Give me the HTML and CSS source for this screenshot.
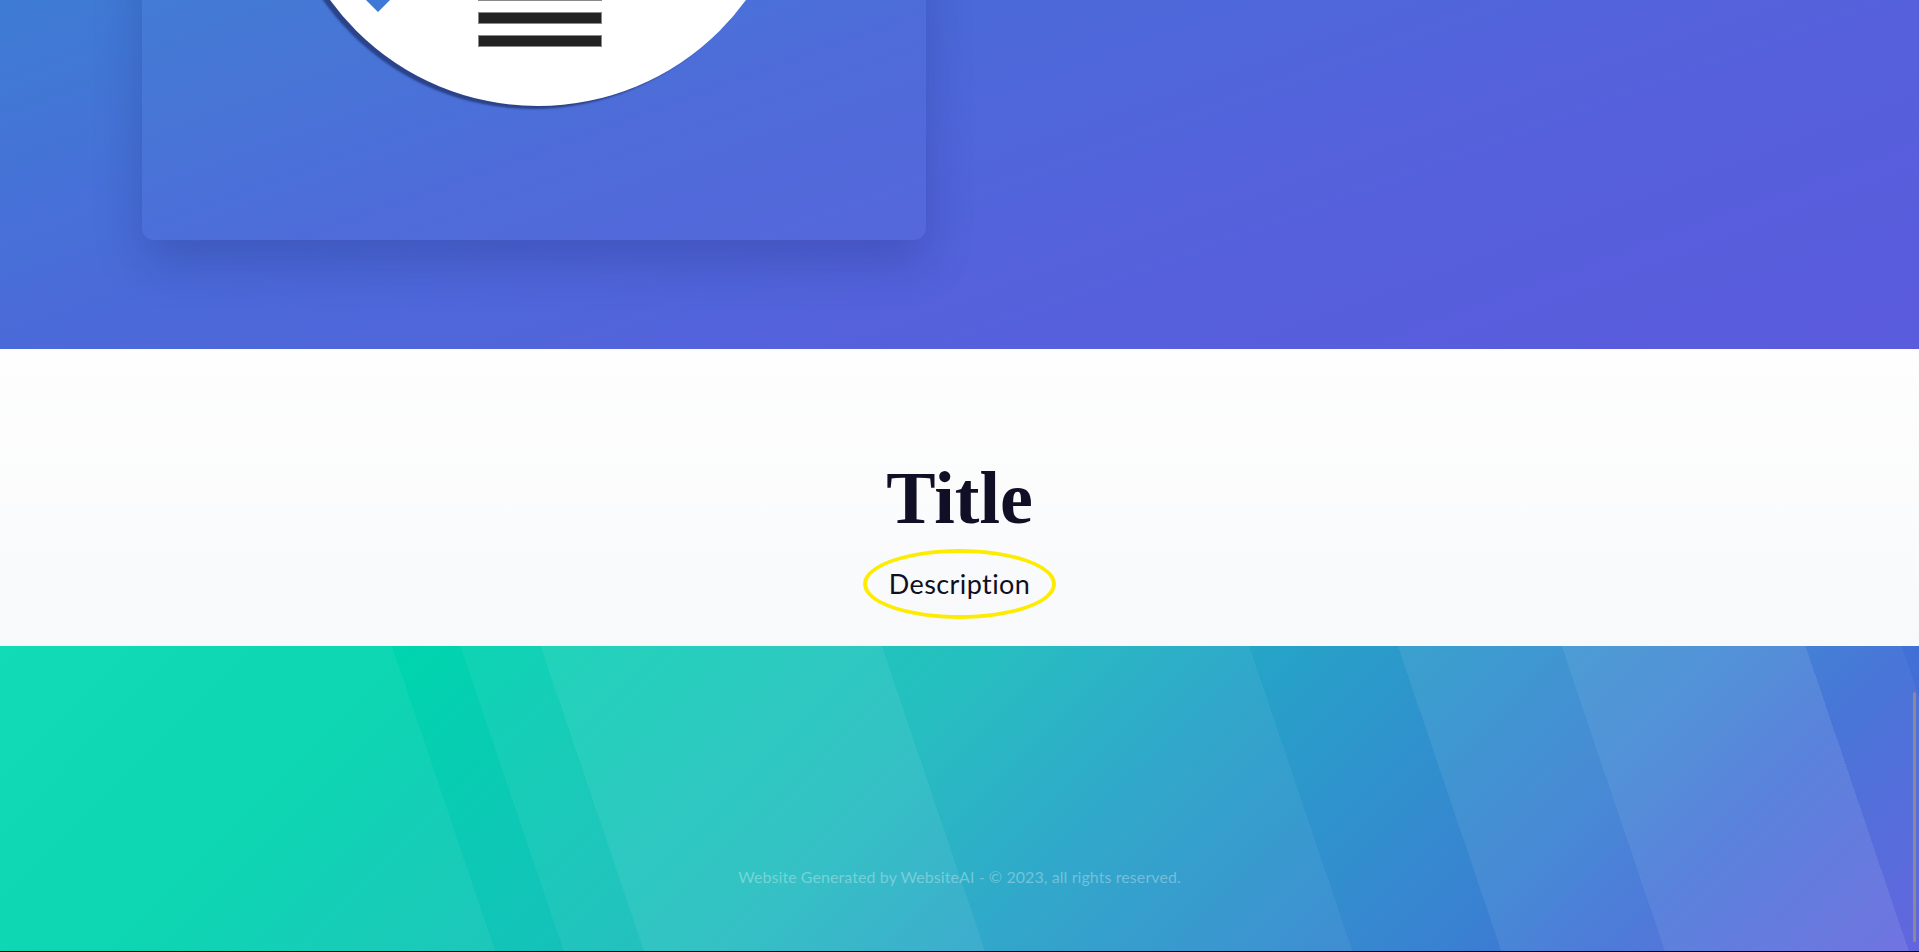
FILE: index.html
```html
<!DOCTYPE html>
<html lang="en">
<head>
<meta charset="utf-8">
<title>Website</title>
<link rel="stylesheet" href="styles.css">
</head>
<body>
<main class="page">
  <section class="hero">
    <div class="hero-card">
      <svg class="hero-icon" viewBox="0 0 514 514" width="514" height="514" aria-hidden="true">
        <g class="check">
          <polygon points="63,386 97,420 150,367 138,355 97,396 75,374"/>
          <polygon points="63,314 97,348 150,295 138,283 97,324 75,302"/>
          <polygon points="63,242 97,276 150,223 138,211 97,252 75,230"/>
        </g>
        <g class="bars">
          <rect x="197.5" y="253.5" width="123" height="11"/>
          <rect x="197.5" y="277.5" width="123" height="11"/>
          <rect x="197.5" y="301.5" width="123" height="11"/>
          <rect x="197.5" y="325.5" width="123" height="11"/>
          <rect x="197.5" y="349.5" width="123" height="11"/>
          <rect x="197.5" y="373.5" width="123" height="11"/>
          <rect x="197.5" y="397.5" width="123" height="11"/>
          <rect x="197.5" y="420.5" width="123" height="11"/>
          <rect x="197.5" y="443.5" width="123" height="11"/>
        </g>
      </svg>
    </div>
  </section>
  <section class="intro">
    <h1 class="intro-title">Title</h1>
    <p class="intro-desc">Description</p>
  </section>
  <footer class="site-footer">
    <p class="footer-note">Website Generated by WebsiteAI - © 2023, all rights reserved.</p>
  </footer>
</main>
<div class="scroll-thumb"></div>
</body>
</html>
```

FILE: styles.css
```css
html, body {
  margin: 0;
  padding: 0;
}

body {
  background: #000;
  font-family: Lato, "Liberation Sans", sans-serif;
  font-variant-ligatures: none;
}

.page {
  display: flex;
  flex-direction: column;
}

/* ---------- hero ---------- */
.hero {
  height: 349px;
  box-sizing: border-box;
  padding: 0 0 109px 142px;
  display: flex;
  align-items: flex-end;
  overflow: hidden;
  background: linear-gradient(160deg, #3e7cd4 0%, #4b6ad9 33%, #5660dc 67%, #5a5bdd 100%);
}

.hero-card {
  flex: none;
  width: 784px;
  height: 700px;
  box-sizing: border-box;
  border-radius: 12px;
  background: rgba(255, 255, 255, 0.02);
  box-shadow: 0 22px 48px rgba(20, 25, 90, 0.22);
  display: flex;
  justify-content: center;
  align-items: flex-end;
  padding: 0 0 134px 8px;
}

.hero-icon {
  display: block;
  flex: none;
  width: 514px;
  height: 514px;
  border-radius: 50%;
  background: #fff;
  box-shadow: -5px 3px 2px rgba(35, 55, 120, 0.8);
}

.check polygon {
  fill: #3f79d6;
}

.bars rect {
  fill: #222;
  stroke: #8a8a8a;
  stroke-width: 1;
}

/* ---------- intro ---------- */
.intro {
  display: flex;
  flex-direction: column;
  align-items: center;
  text-align: center;
  padding: 107px 0 27px;
  background: linear-gradient(180deg, #fefefe 0%, #f8f9fb 100%);
}

.intro-title {
  margin: 0;
  font-family: "Liberation Serif", "DejaVu Serif", serif;
  font-weight: 700;
  font-size: 74px;
  line-height: 85px;
  color: #110f25;
}

.intro-desc {
  margin: 8px 0 0;
  padding: 16px 22px;
  border: 4px solid #fdec00;
  border-radius: 50%;
  font-family: Lato, sans-serif;
  font-size: 27px;
  line-height: 30px;
  letter-spacing: 0.4px;
  color: #100f22;
}

/* ---------- footer ---------- */
.site-footer {
  height: 305px;
  box-sizing: border-box;
  padding-top: 219px;
  background:
    linear-gradient(71.3deg,
      rgba(255, 255, 255, 0.05) 0px 469px,
      rgba(255, 255, 255, 0) 469px 534px,
      rgba(255, 255, 255, 0.05) 534px 610px,
      rgba(255, 255, 255, 0.11) 610px 933px,
      rgba(255, 255, 255, 0.05) 933px 1281px,
      rgba(255, 255, 255, 0) 1281px 1422px,
      rgba(255, 255, 255, 0.07) 1422px 1577px,
      rgba(255, 255, 255, 0.13) 1577px 1808px,
      rgba(255, 255, 255, 0.04) 1808px 1899px,
      rgba(255, 255, 255, 0) 1899px),
    linear-gradient(135deg, #04dab3 0%, #00d4ae 19%, #1bbbbd 45%, #26a2c8 58%, #3a80d2 79%, #4170d6 86%, #5d5fdd 100%);
}

.footer-note {
  margin: 0;
  text-align: center;
  font-family: Lato, sans-serif;
  font-size: 16px;
  line-height: 24px;
  letter-spacing: 0.08px;
  color: rgba(255, 255, 255, 0.33);
}

.scroll-thumb {
  position: fixed;
  top: 692px;
  right: 3px;
  width: 3px;
  height: 250px;
  border-radius: 2px;
  background: #8a8a96;
}
```
